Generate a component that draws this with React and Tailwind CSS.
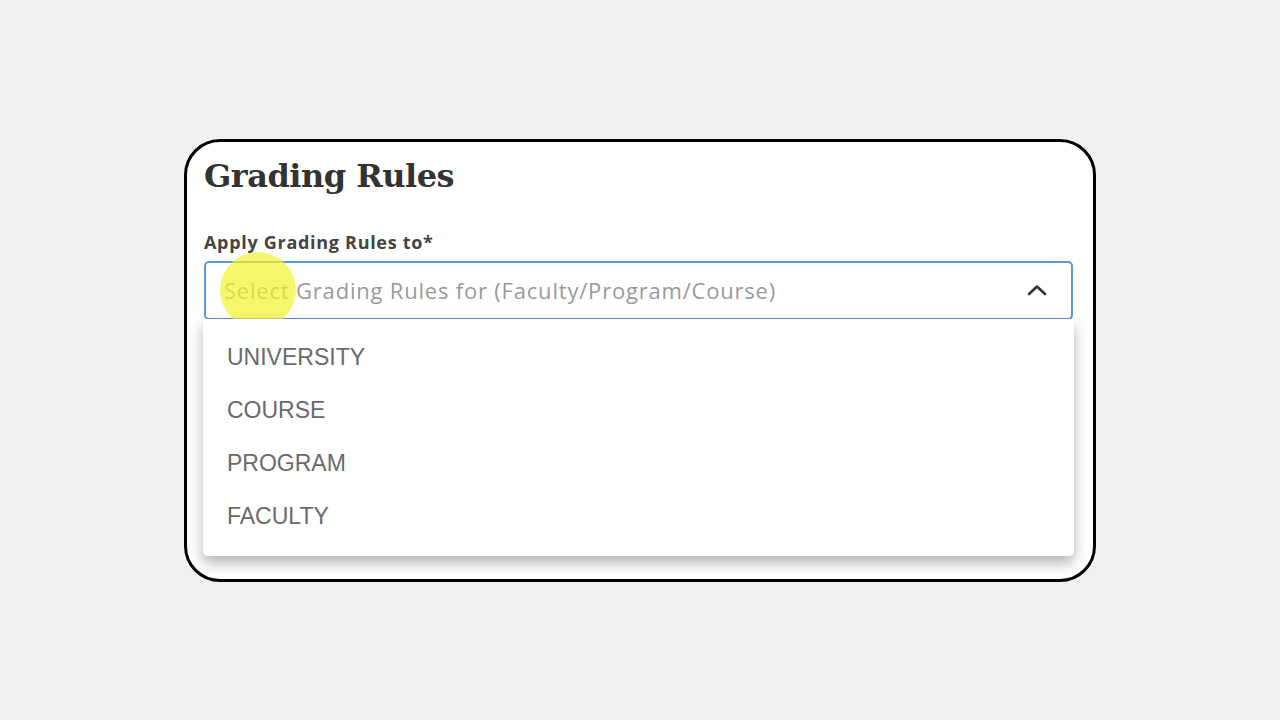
import React from "react";

const options = ["UNIVERSITY", "COURSE", "PROGRAM", "FACULTY"];

function ChevronUp() {
  return (
    <svg width="22" height="14" viewBox="0 0 22 14" fill="none">
      <path d="M3 11 L11 3.5 L19 11" stroke="#333" strokeWidth="2.6" strokeLinecap="round" strokeLinejoin="round" />
    </svg>
  );
}

export default function App() {
  return (
    <div className="min-h-[720px] w-full bg-[#f1f1f1] flex items-center justify-center">
      <div className="relative w-[912px] h-[443px] bg-white border-[3px] border-black rounded-[36px] pl-[17px] pr-[20px] pt-[12px]">
        <h1 className="text-[32px] font-bold text-[#333] font-['DejaVu_Serif',serif] tracking-[-0.5px] leading-[44px]">
          Grading Rules
        </h1>
        <label className="block mt-[33px] text-[18px] font-bold tracking-[0.7px] text-[#444] font-['Open_Sans',sans-serif] leading-[22px]">
          Apply Grading Rules to*
        </label>
        <div className="relative mt-[8px]">
          <div className="h-[59px] border-2 border-[#5b9bd5] rounded-[5px] flex items-center justify-between pl-[18px] pr-[23px]">
            <span className="text-[22px] tracking-[0.8px] text-[#9a9a9a] font-['Open_Sans',sans-serif]">
              Select Grading Rules for (Faculty/Program/Course)
            </span>
            <ChevronUp />
          </div>
          <div className="absolute left-[16px] top-[-9px] w-[76px] h-[76px] rounded-full bg-[#f4f42e]/70 pointer-events-none" />
          <div className="absolute left-[-1px] right-[-1px] top-[58px] bg-white rounded-b-[5px] shadow-[0_7px_14px_rgba(0,0,0,0.3)] pt-[12px] pb-[13px] font-['Liberation_Sans',sans-serif]">
            {options.map((o) => (
              <div key={o} className="h-[53px] flex items-center px-[24px] text-[23px] text-[#6a6a6a]">
                {o}
              </div>
            ))}
          </div>
        </div>
      </div>
    </div>
  );
}
